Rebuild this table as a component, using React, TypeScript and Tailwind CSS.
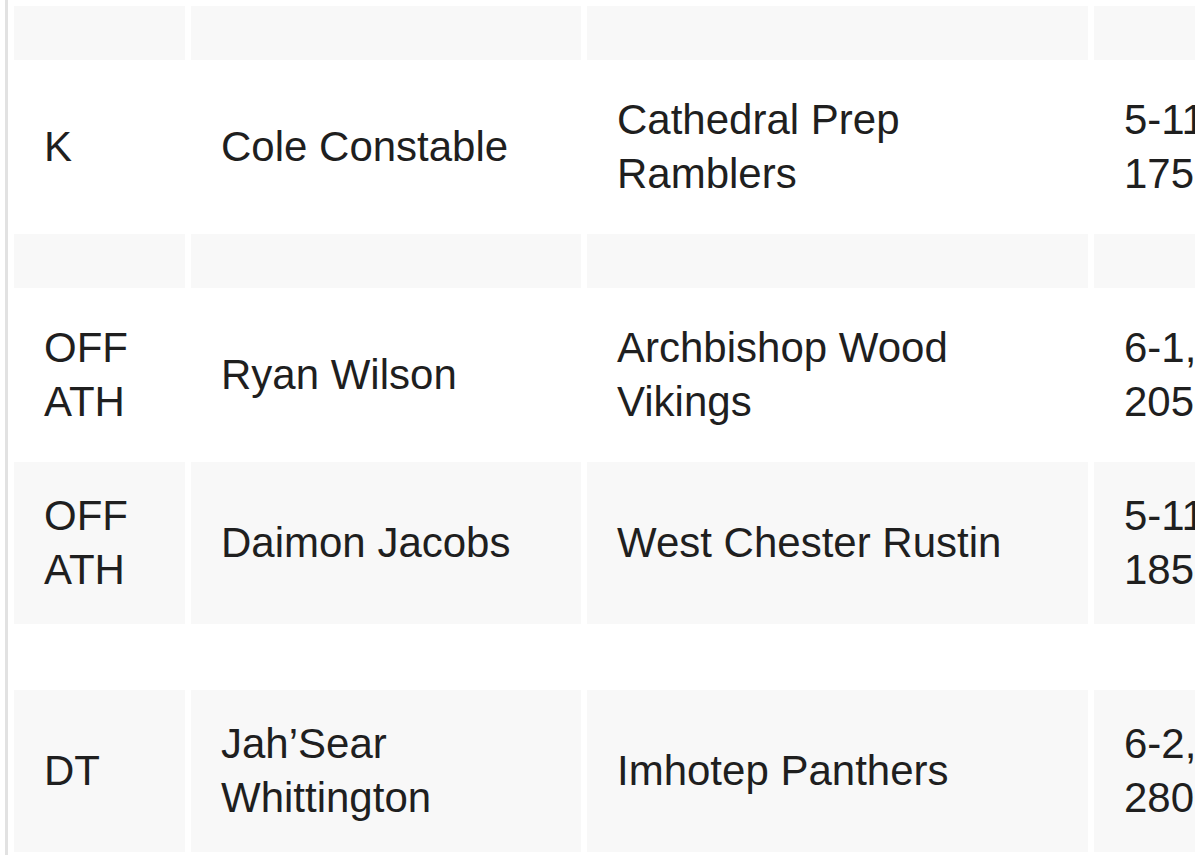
const rows: (string | null)[][] = [
  [null, null, null, null],
  ['K', 'Cole Constable', 'Cathedral Prep Ramblers', '5-11,|175 lbs'],
  [null, null, null, null],
  ['OFF ATH', 'Ryan Wilson', 'Archbishop Wood Vikings', '6-1,|205 lbs'],
  ['OFF ATH', 'Daimon Jacobs', 'West Chester Rustin', '5-11,|185 lbs'],
  [null, null, null, null],
  ['DT', 'Jah’Sear Whittington', 'Imhotep Panthers', '6-2,|280 lbs'],
];

const widths = ['w-[171px]', 'w-[390px]', 'w-[501px]', 'w-[300px]'];

export default function App() {
  return (
    <div className="h-[855px] w-[1195px] overflow-hidden bg-white">
      <div className="ml-[5px] h-full w-max border-l-[3px] border-[#e2e2e2]">
        <table
          className="w-[1392px] table-fixed border-separate border-spacing-[6px] text-[42px] leading-[54px] text-[#1f1f1f]"
          style={{ fontFamily: '"Liberation Sans", Arial, sans-serif' }}
        >
          <tbody>
            {rows.map((row, i) => (
              <tr key={i} className={i % 2 === 0 ? 'bg-[#f8f8f8]' : 'bg-white'}>
                {row.map((cell, j) => (
                  <td key={j} className={'px-[30px] py-[27px] text-left align-middle ' + widths[j]}>
                    {j === 3 && cell
                      ? cell.split('|').map((line, k) => <div key={k}>{line}</div>)
                      : cell}
                  </td>
                ))}
              </tr>
            ))}
          </tbody>
        </table>
      </div>
    </div>
  );
}
